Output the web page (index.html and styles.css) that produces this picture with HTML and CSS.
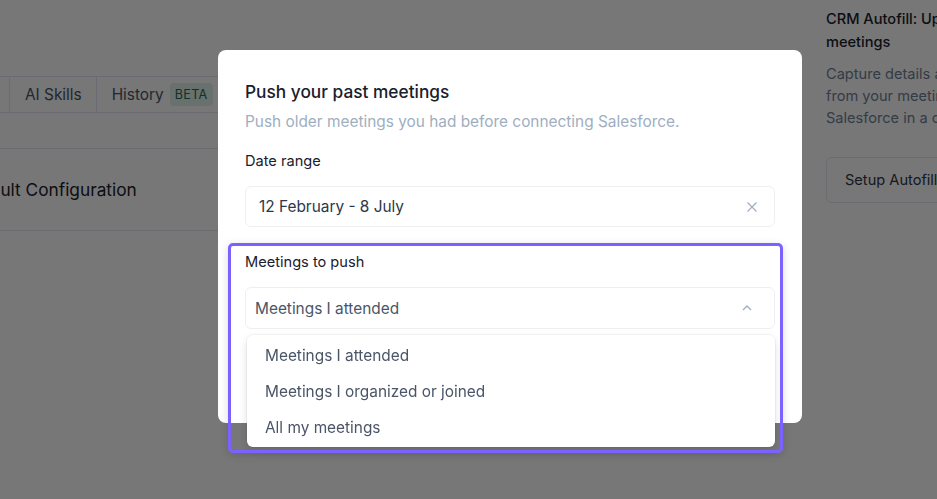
FILE: index.html
```html
<!DOCTYPE html>
<html lang="en">
<head>
  <meta charset="UTF-8">
  <title>Integrations - Salesforce</title>
  <link rel="stylesheet" href="styles.css">
</head>
<body>
<div class="page">
  <main class="main">
    <div class="tabs">
      <div class="tab tab-cut">Settings</div>
      <div class="tab">AI Skills</div>
      <div class="tab">History <span class="badge">BETA</span></div>
    </div>
    <div class="section-gap"></div>
    <div class="section-title">Default Configuration</div>
  </main>
  <aside class="side">
    <h3>CRM Autofill: Update deals from<br>meetings</h3>
    <p>Capture details and next steps<br>from your meetings straight into<br>Salesforce in a couple of clicks.</p>
    <button class="btn-ghost">Setup Autofill</button>
  </aside>
</div>

<div class="overlay"></div>

<div class="modal">
  <h2 class="modal-title">Push your past meetings</h2>
  <p class="modal-sub">Push older meetings you had before connecting Salesforce.</p>

  <label class="field-label">Date range</label>
  <div class="field">
    <span>12 February - 8 July</span>
    <svg class="icon" width="12" height="12" viewBox="0 0 12 12"><path d="M1.5 1.5l9 9M10.5 1.5l-9 9" stroke="#a0aec0" stroke-width="1.2" fill="none"/></svg>
  </div>

  <label class="field-label gap-lg">Meetings to push</label>
  <div class="select-wrap">
    <div class="field select">
      <span>Meetings I attended</span>
      <svg class="icon" width="12" height="8" viewBox="0 0 12 8"><path d="M2 6l4-4 4 4" stroke="#a0aec0" stroke-width="1.3" fill="none"/></svg>
    </div>
    <ul class="menu">
      <li>Meetings I attended</li>
      <li>Meetings I organized or joined</li>
      <li>All my meetings</li>
    </ul>
  </div>
</div>

<div class="focus-ring"></div>
</body>
</html>
```

FILE: styles.css
```css
body { margin: 0; background: #fff; font-family: Inter, "Noto Sans", sans-serif;
  color: #1a202c; overflow: hidden; height: 499px; }

/* page behind the dialog */
.page  { display: flex; height: 499px; }
.main  { width: 790px; padding-top: 76px; overflow: hidden; }
.tabs  { display: flex; height: 35px; border-top: 1px solid #e2e8f0; border-bottom: 1px solid #e2e8f0; }
.tab   { display: flex; align-items: center; gap: 6px; padding: 0 14px 0 15px; font-size: 15.4px;
  color: #4a5568; border-right: 1px solid #e2e8f0; }
.tab-cut { margin-left: -79px; }
.badge { background: #dff3ea; color: #1f6b52; font-size: 12.6px; letter-spacing: .3px;
  padding: 4px 5px; border-radius: 4px; }
.section-gap { height: 35px; border-bottom: 1px solid #e2e8f0; }
.section-title { height: 81px; border-bottom: 1px solid #e2e8f0; display: flex; align-items: center;
  font-size: 17.3px; color: #1a202c; margin-left: -38px; }

.side  { flex: 1; padding: 8px 0 0 36px; overflow: hidden; white-space: nowrap; }
.side h3 { margin: 0; font-size: 14.6px; font-weight: 500; line-height: 23px; }
.side p  { margin: 9px 0 0; font-size: 14.6px; line-height: 22px; color: #718096; }
.btn-ghost { margin-top: 28px; height: 46px; padding: 0 18px; font: 14.6px Inter, sans-serif; color: #2d3748;
  background: #fff; border: 1px solid #e2e8f0; border-radius: 6px; white-space: nowrap; width: 160px; text-align: left; }

.overlay { position: fixed; inset: 0; background: rgba(0, 0, 0, .533); }

/* dialog */
.modal { position: absolute; left: 218px; top: 50px; width: 530px; padding: 30px 27px 94px;
  background: #fff; border-radius: 8px; }
.modal-title { margin: 0; font-size: 17.3px; font-weight: 500; line-height: 23px; color: #1a202c; }
.modal-sub   { margin: 8px 0 0; font-size: 15.4px; line-height: 22px; color: #a0aec0; }
.field-label { display: block; margin-top: 17px; font-size: 14.6px; line-height: 22px; color: #1a202c; }
.field-label.gap-lg { margin-top: 24px; }
.field { display: flex; align-items: center; justify-content: space-between; height: 39px;
  margin-top: 14px; padding: 0 16px 0 13px; border: 1px solid #edf0f3; border-radius: 6px;
  font-size: 15.4px; color: #2d3748; }
.select { height: 40px; padding: 0 21px 0 9px; color: #4a5568; }

.select-wrap { position: relative; }
.menu { position: absolute; left: 2px; right: 0; top: 48px; margin: 0; padding: 3px 0 1px;
  list-style: none; background: #fff; border-radius: 6px;
  box-shadow: 0 0 0 1px rgba(0,0,0,.04), 0 4px 10px rgba(0,0,0,.12); }
.menu li { height: 36px; line-height: 36px; padding-left: 18px; font-size: 15.4px; color: #4a5568; }

/* highlight around the meetings picker */
.focus-ring { position: absolute; left: 228px; top: 243px; width: 549px; height: 204px;
  border: 3px solid #7b61ff; border-radius: 5px;
  box-shadow: 0 2px 8px rgba(0,0,0,.15); }
```
